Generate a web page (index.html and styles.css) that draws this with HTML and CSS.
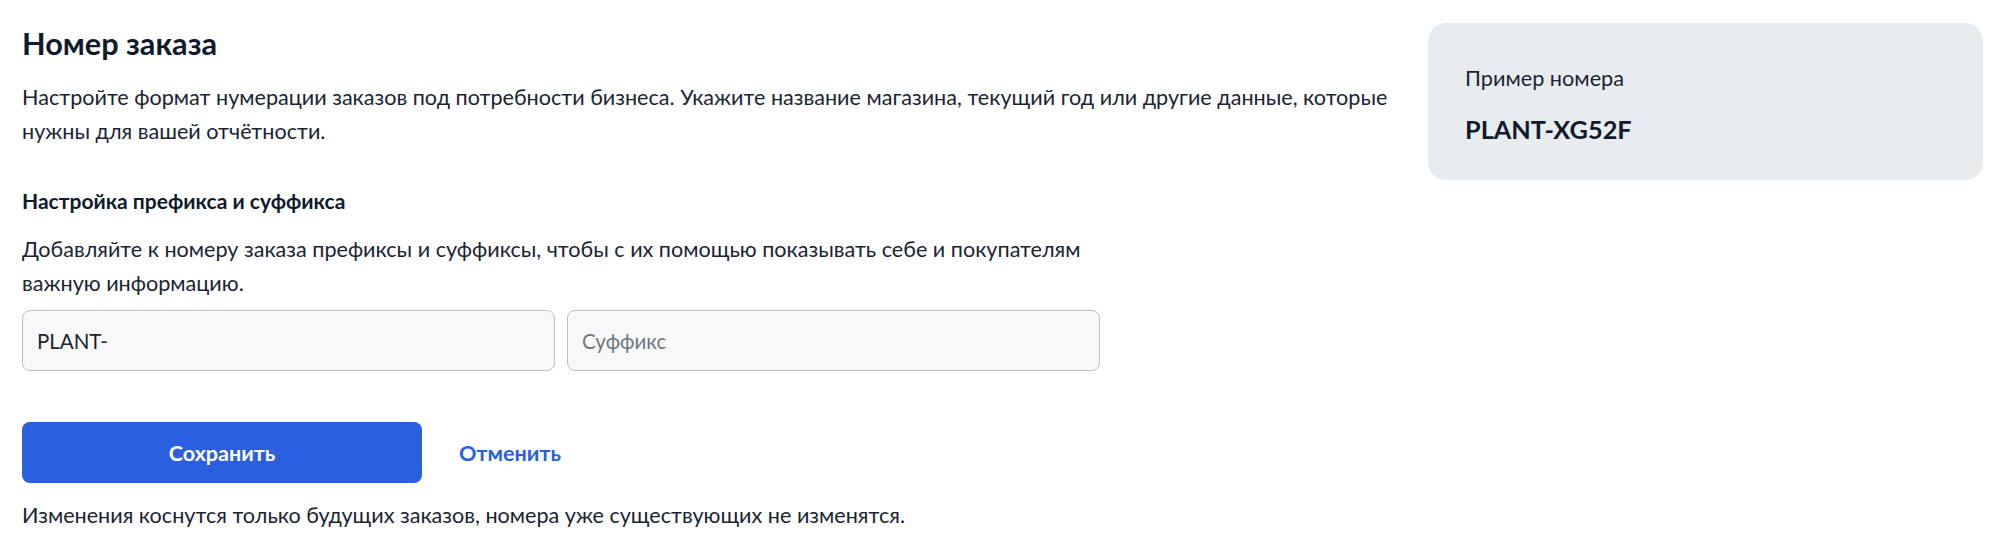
FILE: index.html
```html
<!DOCTYPE html>
<html lang="ru">
<head>
<meta charset="utf-8">
<title>Номер заказа</title>
<link rel="stylesheet" href="styles.css">
</head>
<body>
<div class="page">
  <main class="main">
    <h1 class="title">Номер заказа</h1>
    <p class="text">Настройте формат нумерации заказов под потребности бизнеса. Укажите название магазина, текущий год или другие данные, которые нужны для вашей отчётности.</p>
    <section class="section">
      <h2 class="subtitle">Настройка префикса и суффикса</h2>
      <p class="text">Добавляйте к номеру заказа префиксы и суффиксы, чтобы с их помощью показывать себе и покупателям важную информацию.</p>
      <div class="fields">
        <input class="field" type="text" value="PLANT-">
        <input class="field" type="text" placeholder="Суффикс">
      </div>
    </section>
    <div class="actions">
      <button class="btn-primary" type="button">Сохранить</button>
      <button class="btn-link" type="button">Отменить</button>
    </div>
    <p class="text note">Изменения коснутся только будущих заказов, номера уже существующих не изменятся.</p>
  </main>
  <aside class="preview">
    <div class="preview-label">Пример номера</div>
    <div class="preview-value">PLANT-XG52F</div>
  </aside>
</div>
</body>
</html>
```

FILE: styles.css
```css
* { box-sizing: border-box; }
html, body { margin: 0; padding: 0; background: #ffffff; }
body {
  font-family: Lato, "Open Sans", "Liberation Sans", sans-serif;
  color: #1a2433;
}
.page {
  display: flex;
  align-items: flex-start;
  gap: 38px;
  padding: 23px 16px 0 22px;
}
.main {
  flex: 1;
  min-width: 0;
  padding-top: 3px;
}
.title {
  margin: 0;
  font-size: 30.7px;
  line-height: 36px;
  font-weight: 700;
  color: #0f1b2d;
}
.text {
  margin: 18px 0 0;
  font-size: 21.6px;
  line-height: 34px;
  font-weight: 400;
}
.section {
  max-width: 1078px;
  margin-top: 38px;
}
.subtitle {
  margin: 0;
  font-size: 21px;
  line-height: 30px;
  font-weight: 700;
  color: #0f1b2d;
}
.section .text { margin-top: 16px; }
.fields {
  display: grid;
  grid-template-columns: 1fr 1fr;
  gap: 12px;
  margin-top: 10px;
}
.field {
  height: 61px;
  padding: 0 14px;
  border: 1px solid #b9c0c9;
  border-radius: 8px;
  background: #f8f8f8;
  font-family: inherit;
  font-size: 20.5px;
  color: #1a2433;
  outline: none;
}
.field::placeholder { color: #6b7785; }
.actions {
  display: flex;
  align-items: center;
  gap: 37px;
  margin-top: 51px;
}
.btn-primary {
  width: 400px;
  height: 61px;
  border: 0;
  border-radius: 8px;
  background: #2a5fe0;
  color: #ffffff;
  font-family: inherit;
  font-size: 21.5px;
  font-weight: 700;
  cursor: pointer;
}
.btn-link {
  border: 0;
  padding: 0;
  background: none;
  color: #2a5fe0;
  font-family: inherit;
  font-size: 21.6px;
  font-weight: 700;
  cursor: pointer;
}
.note { margin-top: 15px; }
.preview {
  flex: 0 0 555px;
  height: 157px;
  padding: 40px 37px 0;
  border-radius: 18px;
  background: #e9ecef;
}
.preview-label {
  font-size: 21.7px;
  line-height: 30px;
}
.preview-value {
  margin-top: 21px;
  font-size: 25.3px;
  line-height: 30px;
  font-weight: 700;
  color: #0f1b2d;
}
```
